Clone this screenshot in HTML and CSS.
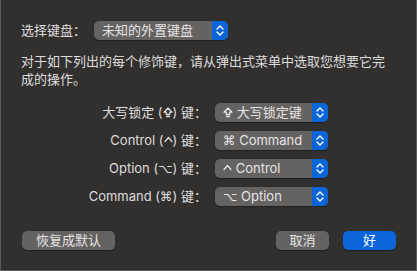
FILE: index.html
```html
<!DOCTYPE html>
<html lang="zh-CN">
<head>
<meta charset="utf-8">
<link rel="stylesheet" href="styles.css">
</head>
<body>
<div class="sheet">
  <div class="kb-row">
    <span class="kb-label">选择键盘：</span>
    <div class="popup popup-kb">
      <span class="popup-value">未知的外置键盘</span>
      <span class="arrows"><svg width="8" height="11" viewBox="0 0 8 11"><path d="M1 4 L4 1 L7 4 M1 7 L4 10 L7 7" fill="none" stroke="#fff" stroke-width="1.4" stroke-linecap="round" stroke-linejoin="round"/></svg></span>
    </div>
  </div>
  <p class="desc">对于如下列出的每个修饰键，请从弹出式菜单中选取您想要它完成的操作。</p>
  <div class="map">
    <span class="map-label">大写锁定 (<svg class="caps" width="10" height="11" viewBox="0 0 10 11"><path d="M5 1 L9 5.2 L6.8 5.2 L6.8 7.3 L3.2 7.3 L3.2 5.2 L1 5.2 Z" fill="none" stroke="#dedddd" stroke-width="1.3" stroke-linejoin="round"/><rect x="3" y="8.6" width="4" height="1.6" fill="#dedddd"/></svg>) 键：</span>
    <div class="popup"><span class="popup-value"><svg class="caps" width="10" height="11" viewBox="0 0 10 11"><path d="M5 1 L9 5.2 L6.8 5.2 L6.8 7.3 L3.2 7.3 L3.2 5.2 L1 5.2 Z" fill="none" stroke="#e6e5e5" stroke-width="1.3" stroke-linejoin="round"/><rect x="3" y="8.6" width="4" height="1.6" fill="#e6e5e5"/></svg> 大写锁定键</span><span class="arrows"><svg width="8" height="11" viewBox="0 0 8 11"><path d="M1 4 L4 1 L7 4 M1 7 L4 10 L7 7" fill="none" stroke="#fff" stroke-width="1.4" stroke-linecap="round" stroke-linejoin="round"/></svg></span></div>
    <span class="map-label">Control (<svg class="ctrl" width="9" height="11" viewBox="0 0 9 11"><path d="M1 6.5 L4.5 2.5 L8 6.5" fill="none" stroke="#dedddd" stroke-width="1.3" stroke-linecap="round" stroke-linejoin="round"/></svg>) 键：</span>
    <div class="popup"><span class="popup-value"><span class="sym">⌘</span> Command</span><span class="arrows"><svg width="8" height="11" viewBox="0 0 8 11"><path d="M1 4 L4 1 L7 4 M1 7 L4 10 L7 7" fill="none" stroke="#fff" stroke-width="1.4" stroke-linecap="round" stroke-linejoin="round"/></svg></span></div>
    <span class="map-label">Option (<span class="sym">⌥</span>) 键：</span>
    <div class="popup"><span class="popup-value"><svg class="ctrl" width="9" height="11" viewBox="0 0 9 11"><path d="M1 6.5 L4.5 2.5 L8 6.5" fill="none" stroke="#e6e5e5" stroke-width="1.3" stroke-linecap="round" stroke-linejoin="round"/></svg> Control</span><span class="arrows"><svg width="8" height="11" viewBox="0 0 8 11"><path d="M1 4 L4 1 L7 4 M1 7 L4 10 L7 7" fill="none" stroke="#fff" stroke-width="1.4" stroke-linecap="round" stroke-linejoin="round"/></svg></span></div>
    <span class="map-label">Command (<span class="sym">⌘</span>) 键：</span>
    <div class="popup"><span class="popup-value"><span class="sym">⌥</span> Option</span><span class="arrows"><svg width="8" height="11" viewBox="0 0 8 11"><path d="M1 4 L4 1 L7 4 M1 7 L4 10 L7 7" fill="none" stroke="#fff" stroke-width="1.4" stroke-linecap="round" stroke-linejoin="round"/></svg></span></div>
  </div>
  <div class="buttons">
    <button class="btn btn-default">恢复成默认</button>
    <div class="spacer"></div>
    <button class="btn btn-cancel">取消</button>
    <button class="btn btn-primary">好</button>
  </div>
</div>
</body>
</html>
```
FILE: styles.css
```css
html, body {
  margin: 0;
  padding: 0;
  background: #32302f;
}
body {
  font-family: "Inter", "Noto Sans CJK SC", sans-serif;
  font-size: 13px;
  color: #dedddd;
}
.sheet {
  box-sizing: border-box;
  width: 417px;
  height: 271px;
  background: #32302f;
  border: 1px solid #5c5a59;
  border-top: none;
  padding: 21px 0 0 20px;
  display: flex;
  flex-direction: column;
}
.kb-row {
  display: flex;
  align-items: center;
  height: 19px;
}
.kb-label {
  width: 73px;
  line-height: 19px;
}
.popup {
  box-sizing: border-box;
  display: flex;
  align-items: stretch;
  height: 19px;
  border-radius: 5px;
  background: #656262;
  overflow: hidden;
  box-shadow: 0 0.5px 1px rgba(0,0,0,0.35);
}
.popup-kb {
  width: 134px;
}
.popup-value {
  flex: 1;
  padding-left: 8px;
  line-height: 19px;
  color: #e6e5e5;
  white-space: nowrap;
}
.arrows {
  width: 16px;
  background: #0b64d8;
  display: flex;
  align-items: center;
  justify-content: center;
}
.desc {
  margin: 12px 0 0 0;
  width: 375px;
  line-height: 18px;
}
.map {
  margin-top: 15px;
  display: grid;
  grid-template-columns: 180px 113px;
  column-gap: 14px;
  row-gap: 9px;
  grid-auto-rows: 19px;
}
.map-label {
  text-align: right;
  line-height: 19px;
  white-space: nowrap;
  margin-right: -6px;
}
.sym {
  font-family: "DejaVu Sans", sans-serif;
  font-size: 12.5px;
}
.caps {
  vertical-align: -1px;
}
.ctrl {
  vertical-align: -1px;
}
.buttons {
  margin-top: 25px;
  display: flex;
  align-items: center;
  padding-right: 20px;
}
.spacer { flex: 1; }
.btn {
  font-family: "Inter", "Noto Sans CJK SC", sans-serif;
  font-size: 13px;
  height: 19px;
  line-height: 19px;
  padding: 0;
  border: none;
  border-radius: 5px;
  color: #e6e5e5;
  background: #656262;
  box-shadow: 0 0.5px 1px rgba(0,0,0,0.35);
}
.btn-default { width: 93px; margin-left: 1px; }
.btn-cancel { width: 53px; }
.btn-primary {
  width: 53px;
  margin-left: 14px;
  background: #0b64d8;
  color: #fff;
}
```
